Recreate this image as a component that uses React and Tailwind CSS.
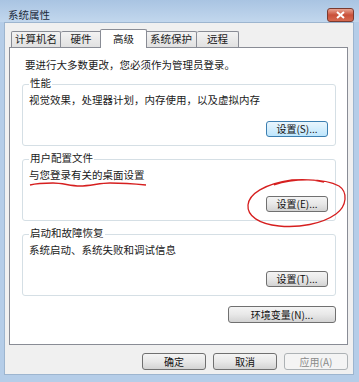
const font = "font-['Noto_Sans_CJK_SC','Noto_Sans',sans-serif]";

const Btn = ({ children, className = "", variant = "normal" }) => {
  const look =
    variant === "focus"
      ? "border-[#3c7fb1] bg-gradient-to-b from-[#eaf6fd] to-[#bee6fd] text-[#111]"
      : variant === "disabled"
      ? "border-[#adb2b5] bg-[#f4f4f4] text-[#8a8a8a]"
      : "border-[#707070] bg-gradient-to-b from-[#f4f4f4] via-[#e8e8e8] to-[#d3d3d3] text-[#111]";
  return (
    <button
      className={`flex items-center justify-center rounded-[3px] border text-[10px] leading-none ${look} ${className}`}
    >
      {children}
    </button>
  );
};

const Group = ({ label, text, button, variant }) => (
  <div className="relative flex h-[62px] flex-col justify-between rounded-[3px] border border-[#d5dfe5] pb-[8px] pr-[7px] pl-[6px] pt-[8px]">
    <span className="absolute -top-[9px] left-[6px] bg-white px-[1px] text-[10.5px] leading-[14px] text-[#1a1a1a]">
      {label}
    </span>
    <p className="text-[10.5px] leading-[14px] text-[#1a1a1a]">{text}</p>
    <Btn variant={variant} className="h-[16px] w-[62px] self-end">
      {button}
    </Btn>
  </div>
);

const Tab = ({ children, className = "" }) => (
  <div
    className={`flex h-[16px] items-center justify-center rounded-t-[2px] border border-b-0 border-[#898c95] bg-gradient-to-b from-[#f3f3f3] to-[#e1e1e1] text-[10.5px] leading-none text-[#1a1a1a] ${className}`}
  >
    {children}
  </div>
);

const App = () => {
  return (
    <div className={`relative flex h-[382px] w-[359px] flex-col overflow-hidden bg-[#b5cde8] pb-[7px] ${font}`}>
      <div className="flex h-[22px] items-start bg-gradient-to-b from-[#a9c4e2] to-[#c2d7ed]">
        <span className="ml-[8px] mt-[8px] text-[10.5px] leading-[14px] text-[#1c2a3a]">系统属性</span>
        <div className="ml-auto mr-[5px] mt-[8px] flex h-[14px] w-[27px] items-center justify-center rounded-[3px] border border-[#7a3b30] bg-gradient-to-b from-[#e8a493] via-[#c9503a] to-[#d86a50]">
          <svg width="9" height="8" viewBox="0 0 9 8">
            <path d="M1 1 L8 7 M8 1 L1 7" stroke="#fff" strokeWidth="2" />
          </svg>
        </div>
      </div>

      <div className="mx-[4px] mr-[5px] flex flex-1 flex-col border border-[#9db5cf] bg-[#f0f0f0] pt-[6px]">
        <div className="flex h-[18px] items-end pl-[6px]">
          <Tab className="w-[50px]">计算机名</Tab>
          <Tab className="w-[41px] border-l-0">硬件</Tab>
          <div className="relative z-10 -mx-[2px] -mb-[1px] flex h-[19px] w-[47px] items-center justify-center rounded-t-[2px] border border-b-0 border-[#898c95] bg-white text-[10.5px] leading-none text-[#1a1a1a]">
            高级
          </div>
          <Tab className="w-[52px]">系统保护</Tab>
          <Tab className="w-[42px] border-l-0">远程</Tab>
        </div>

        <div className="ml-[4px] mr-[5px] flex h-[298px] flex-col border border-[#898c95] bg-white pl-[12px] pr-[11px] pt-[10px]">
          <p className="ml-[3px] text-[10.5px] leading-[14px] text-[#1a1a1a]">要进行大多数更改，您必须作为管理员登录。</p>
          <div className="mt-[12px] flex flex-col gap-[13px]">
            <Group label="性能" text="视觉效果，处理器计划，内存使用，以及虚拟内存" button="设置(S)..." variant="focus" />
            <Group label="用户配置文件" text="与您登录有关的桌面设置" button="设置(E)..." />
            <Group label="启动和故障恢复" text="系统启动、系统失败和调试信息" button="设置(T)..." />
          </div>
          <Btn className="mt-[10px] h-[17px] w-[108px] self-end">环境变量(N)...</Btn>
        </div>

        <div className="mt-[8px] flex justify-end gap-[7px] pr-[5px]">
          <Btn className="h-[17px] w-[64px] text-[10.5px]">确定</Btn>
          <Btn className="h-[17px] w-[64px] text-[10.5px]">取消</Btn>
          <Btn variant="disabled" className="h-[17px] w-[64px]">应用(A)</Btn>
        </div>
      </div>

      <svg className="pointer-events-none absolute left-[28px] top-[180px]" width="122" height="9" viewBox="0 0 122 9">
        <path d="M2 5 C10 3, 18 3, 25 3 C35 3, 42 6, 52 6 C62 6, 72 3, 82 3 C95 3, 108 4, 118 5" fill="none" stroke="#d61f1f" strokeWidth="1.3" />
      </svg>
      <svg className="pointer-events-none absolute left-[244px] top-[176px]" width="106" height="54" viewBox="0 0 106 54">
        <path
          d="M30 9 C50 2, 80 2, 95 10 C104 16, 103 30, 92 38 C78 48, 55 52, 35 50 C15 48, 3 40, 4 29 C5 18, 20 8, 48 4 C60 3, 72 4, 80 6"
          fill="none"
          stroke="#d61f1f"
          strokeWidth="1.3"
        />
      </svg>
    </div>
  );
};

export default App;
